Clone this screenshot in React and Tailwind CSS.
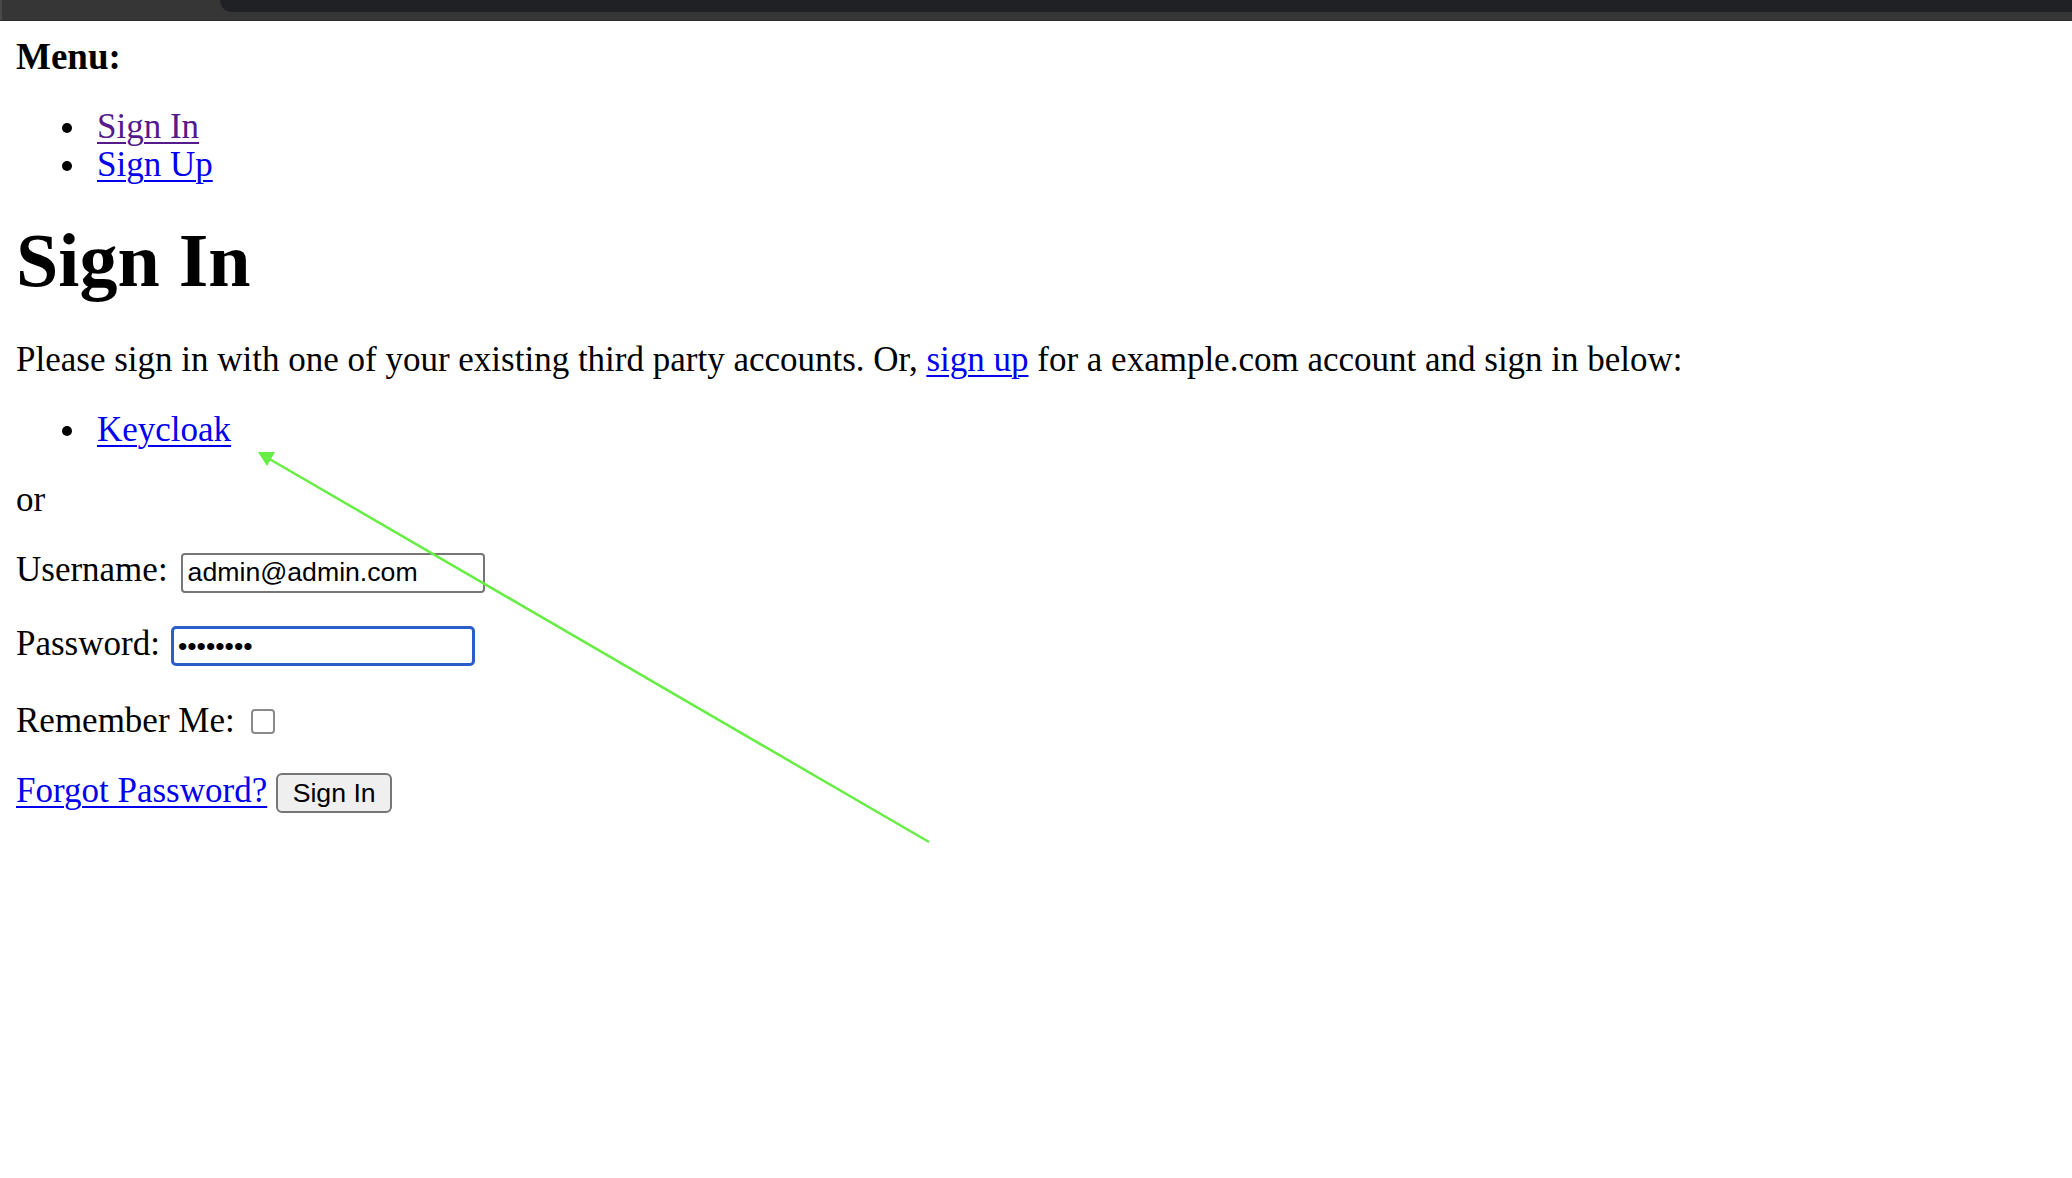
import React from "react";

function TopBar() {
  return (
    <div className="flex h-[21px] w-full bg-[#363636] border-b border-[#2a2a2a]">
      <div className="w-[2px] h-full bg-[#4a4a4a]" />
      <div className="w-[218px] h-full" />
      <div className="flex-1 h-[12px] bg-[#202124] rounded-bl-[12px]" />
    </div>
  );
}

function Bullet({ children }) {
  return (
    <li className="flex items-start">
      <span className="mt-[15px] ml-[46px] w-[10px] h-[10px] rounded-full bg-black shrink-0" />
      <span className="ml-[25px]">{children}</span>
    </li>
  );
}

export default function App() {
  return (
    <div className="relative min-h-screen w-full bg-white text-black font-['Liberation_Serif','Times_New_Roman',serif] text-[35px] leading-[38px]">
      <TopBar />
      <div className="px-[16px]">
        <p className="mt-[17px] font-bold text-[37px]">Menu:</p>
        <ul className="mt-[32px]">
          <Bullet>
            <a href="#" className="text-[#551a8b] underline decoration-2 underline-offset-[4px]">
              Sign In
            </a>
          </Bullet>
          <Bullet>
            <a href="#" className="text-[#0000ee] underline decoration-2 underline-offset-[4px]">
              Sign Up
            </a>
          </Bullet>
        </ul>
        <h1 className="mt-[34px] text-[76px] leading-[84px] font-bold">Sign In</h1>
        <p className="mt-[39px]">
          Please sign in with one of your existing third party accounts. Or,{" "}
          <a href="#" className="text-[#0000ee] underline decoration-2 underline-offset-[4px]">
            sign up
          </a>{" "}
          for a example.com account and sign in below:
        </p>
        <ul className="mt-[32px]">
          <Bullet>
            <a href="#" className="text-[#0000ee] underline decoration-2 underline-offset-[4px]">
              Keycloak
            </a>
          </Bullet>
        </ul>
        <p className="mt-[32px]">or</p>

        <div className="mt-[32px] flex items-baseline gap-[13px]">
          <label>Username:</label>
          <input
            type="text"
            readOnly
            defaultValue="admin@admin.com"
            className="w-[304px] h-[40px] px-[5px] border-2 border-[#767676] rounded-[4px] bg-white text-black text-[26.67px] leading-[30px] font-['Liberation_Sans',Arial,sans-serif] outline-none"
          />
        </div>

        <div className="mt-[32px] flex items-baseline gap-[11px]">
          <label>Password:</label>
          <input
            type="password"
            readOnly
            defaultValue="12345678"
            className="w-[304px] h-[40px] px-[4px] border-[3px] border-[#2c5ec9] rounded-[5px] bg-white text-black text-[26.67px] leading-[30px] font-['Liberation_Sans',Arial,sans-serif] outline-none"
          />
        </div>

        <div className="mt-[36px] flex items-center gap-[16px] h-[38px]">
          <label>Remember Me:</label>
          <input
            type="checkbox"
            className="appearance-none w-[24px] h-[25px] border-2 border-[#8a8a8a] rounded-[4px] bg-white"
          />
        </div>

        <div className="mt-[32px] flex items-baseline gap-[9px]">
          <a href="#" className="text-[#0000ee] underline decoration-2 underline-offset-[4px]">
            Forgot Password?
          </a>
          <button
            type="button"
            className="w-[116px] h-[40px] border-2 border-[#767676] rounded-[6px] bg-[#efefef] text-black text-[26.67px] leading-[30px] font-['Liberation_Sans',Arial,sans-serif]"
          >
            Sign In
          </button>
        </div>
      </div>

      <svg
        className="absolute left-0 top-0 pointer-events-none"
        width="2072"
        height="1178"
        viewBox="0 0 2072 1178"
      >
        <line x1="929" y1="842" x2="266" y2="457" stroke="#66ee44" strokeWidth="2.5" />
        <polygon points="258,452 275,452 267,466" fill="#66ee44" />
      </svg>
    </div>
  );
}
